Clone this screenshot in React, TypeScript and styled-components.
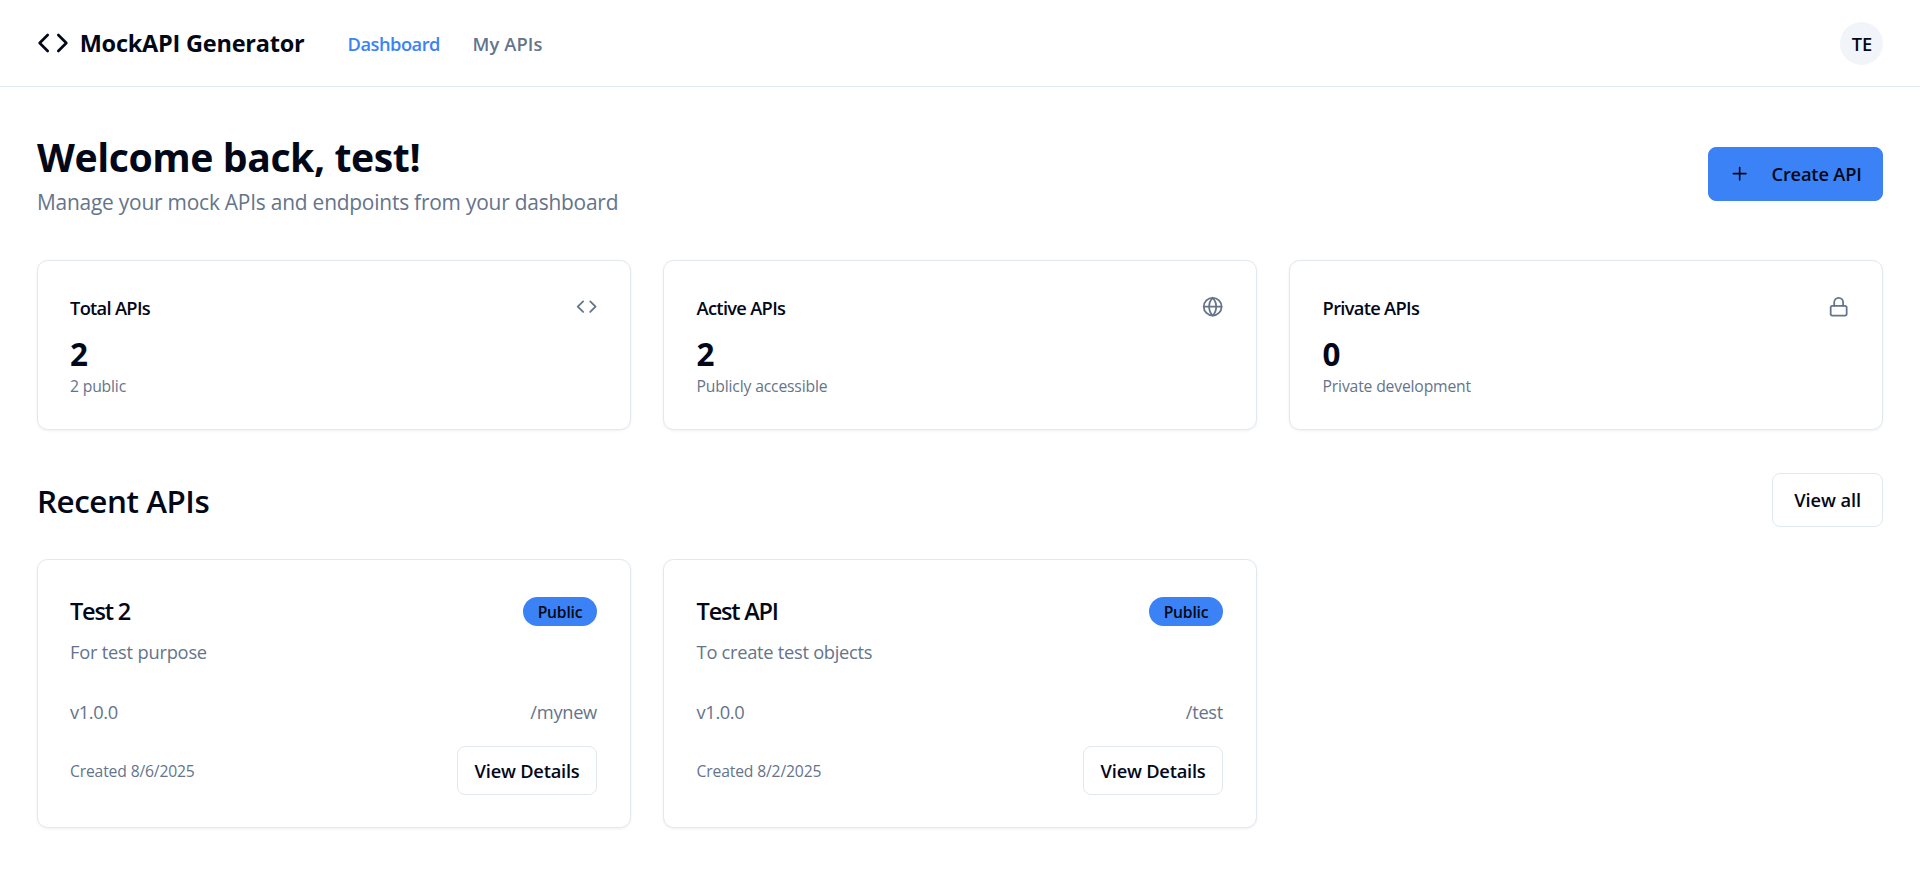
import React from 'react';
import styled, { createGlobalStyle } from 'styled-components';
import { Code, Globe, Lock, Plus } from 'lucide-react';

const color = {
  text: '#020817',
  muted: '#64748b',
  primary: '#3b82f6',
  border: '#e2e8f0',
  subtle: '#f1f5f9',
};

const GlobalStyle = createGlobalStyle`
  *, *::before, *::after { box-sizing: border-box; }
  body {
    margin: 0;
    background: #ffffff;
    color: ${color.text};
    font-family: "Segoe UI", "Open Sans", sans-serif;
  }
  h1, h2, h3, p { margin: 0; }
  button { font-family: inherit; }
`;

const Header = styled.header`
  display: flex;
  align-items: center;
  justify-content: space-between;
  height: 87px;
  padding: 0 37px;
  border-bottom: 1px solid ${color.border};
`;

const HeaderLeft = styled.div`
  display: flex;
  align-items: center;
  gap: 43px;
`;

const Logo = styled.div`
  display: flex;
  align-items: center;
  gap: 10.67px;
  font-size: 23.5px;
  font-weight: 700;
  letter-spacing: -0.23px;
  line-height: 32px;
`;

const Nav = styled.nav`
  display: flex;
  gap: 32.67px;
  padding-top: 2px;
`;

const NavLink = styled.a<{ $active?: boolean; $tracking?: number }>`
  color: ${(p) => (p.$active ? color.primary : color.muted)};
  font-size: 18.3px;
  font-weight: 600;
  letter-spacing: ${(p) => p.$tracking ?? 0}px;
  line-height: 28px;
`;

const Avatar = styled.div`
  display: flex;
  align-items: center;
  justify-content: center;
  width: 43px;
  height: 43px;
  padding: 1px 0 0 1px;
  border-radius: 50%;
  background: ${color.subtle};
  font-size: 18.3px;
  font-weight: 600;
`;

const Main = styled.main`
  padding: 43px 37px;
`;

const Hero = styled.section`
  display: flex;
  align-items: center;
  justify-content: space-between;
  height: 88px;
  margin-bottom: 42px;
`;

const HeroTitle = styled.h1`
  font-size: 39.2px;
  font-weight: 700;
  letter-spacing: -0.43px;
  line-height: 53px;
`;

const HeroText = styled.p`
  margin-top: 3px;
  color: ${color.muted};
  font-size: 20.9px;
  letter-spacing: -0.21px;
  line-height: 32px;
`;

const Button = styled.button<{ $primary?: boolean; $small?: boolean }>`
  display: inline-flex;
  align-items: center;
  justify-content: center;
  gap: 21.33px;
  height: ${(p) => (p.$small ? 49 : 54)}px;
  padding: 0 ${(p) => (p.$primary ? 20.3 : p.$small ? 16.5 : 21)}px;
  border: 1px solid ${(p) => (p.$primary ? color.primary : color.border)};
  border-radius: 8px;
  background: ${(p) => (p.$primary ? color.primary : '#ffffff')};
  color: ${color.text};
  font-size: 18.3px;
  font-weight: 600;
  letter-spacing: ${(p) => (p.$primary ? -0.18 : p.$small ? -0.22 : -0.1)}px;
  line-height: 28px;
  white-space: nowrap;
`;

const CardGrid = styled.div`
  display: grid;
  grid-template-columns: repeat(3, 1fr);
  gap: 32px;
`;

const Card = styled.article<{ $inset?: number }>`
  padding: 32px 33px 32px ${(p) => p.$inset ?? 32}px;
  border: 1px solid ${color.border};
  border-radius: 10.67px;
  background: #ffffff;
  box-shadow: 0 1px 3px rgba(0, 0, 0, 0.06);
`;

const StatHeader = styled.div`
  display: flex;
  align-items: center;
  justify-content: space-between;
  height: 28px;
  margin-bottom: 11px;
  color: ${color.muted};
`;

const StatTitle = styled.h3`
  padding-top: 2px;
  color: ${color.text};
  font-size: 18.3px;
  font-weight: 600;
  letter-spacing: -0.7px;
  line-height: 28px;
`;

const StatValue = styled.div`
  padding-top: 1px;
  font-size: 31.4px;
  font-weight: 700;
  line-height: 41px;
`;

const Small = styled.p`
  padding-top: 1px;
  color: ${color.muted};
  font-size: 15.7px;
  letter-spacing: -0.16px;
  line-height: 22px;
`;

const SectionHeader = styled.div`
  display: flex;
  align-items: center;
  justify-content: space-between;
  height: 54px;
  margin: 43px 0 32px;
`;

const SectionTitle = styled.h2`
  padding-top: 2px;
  font-size: 31.4px;
  font-weight: 600;
  letter-spacing: -0.45px;
  line-height: 42px;
`;

const ApiHeader = styled.div`
  display: flex;
  align-items: center;
  justify-content: space-between;
  height: 39px;
`;

const ApiTitle = styled.h3`
  padding-bottom: 2px;
  font-size: 23.5px;
  font-weight: 600;
  letter-spacing: -1.2px;
  line-height: 32px;
`;

const Badge = styled.span`
  display: inline-flex;
  align-items: center;
  height: 29px;
  padding: 1px 14.67px 0;
  border-radius: 15px;
  background: ${color.primary};
  font-size: 15.7px;
  font-weight: 600;
  letter-spacing: -0.2px;
`;

const ApiText = styled.span<{ $tracking?: number }>`
  color: ${color.muted};
  font-size: 18.3px;
  letter-spacing: ${(p) => p.$tracking ?? -0.17}px;
  line-height: 28px;
`;

const ApiDescription = styled(ApiText).attrs({ as: 'p' })`
  margin-top: 7px;
`;

const ApiMeta = styled.div`
  display: flex;
  justify-content: space-between;
  height: 28px;
  margin-top: 32px;
`;

const ApiFooter = styled.div`
  display: flex;
  align-items: center;
  justify-content: space-between;
  margin-top: 20px;
`;

const stats = [
  { title: 'Total APIs', value: 2, note: '2 public', inset: 32, Icon: Code },
  { title: 'Active APIs', value: 2, note: 'Publicly accessible', inset: 32.6, Icon: Globe },
  { title: 'Private APIs', value: 0, note: 'Private development', inset: 32.6, Icon: Lock },
];

const apis = [
  { name: 'Test 2', description: 'For test purpose', inset: 32, tracking: -0.22, path: '/mynew', created: '8/6/2025' },
  { name: 'Test API', description: 'To create test objects', inset: 32.6, tracking: -0.28, path: '/test', created: '8/2/2025' },
];

export default function App() {
  return (
    <>
      <GlobalStyle />
      <Header>
        <HeaderLeft>
          <Logo>
            <Code size={32} />
            <span>MockAPI Generator</span>
          </Logo>
          <Nav>
            <NavLink $active $tracking={-0.5}>Dashboard</NavLink>
            <NavLink $tracking={0.1}>My APIs</NavLink>
          </Nav>
        </HeaderLeft>
        <Avatar>TE</Avatar>
      </Header>
      <Main>
        <Hero>
          <div>
            <HeroTitle>Welcome back, test!</HeroTitle>
            <HeroText>Manage your mock APIs and endpoints from your dashboard</HeroText>
          </div>
          <Button $primary>
            <Plus size={21.33} strokeWidth={1.8} />
            Create API
          </Button>
        </Hero>
        <CardGrid>
          {stats.map(({ title, value, note, inset, Icon }) => (
            <Card key={title} $inset={inset}>
              <StatHeader>
                <StatTitle>{title}</StatTitle>
                <Icon size={21.33} />
              </StatHeader>
              <StatValue>{value}</StatValue>
              <Small>{note}</Small>
            </Card>
          ))}
        </CardGrid>
        <SectionHeader>
          <SectionTitle>Recent APIs</SectionTitle>
          <Button>View all</Button>
        </SectionHeader>
        <CardGrid>
          {apis.map((api) => (
            <Card key={api.name} $inset={api.inset}>
              <ApiHeader>
                <ApiTitle>{api.name}</ApiTitle>
                <Badge>Public</Badge>
              </ApiHeader>
              <ApiDescription $tracking={api.tracking}>{api.description}</ApiDescription>
              <ApiMeta>
                <ApiText $tracking={-0.4}>v1.0.0</ApiText>
                <ApiText $tracking={-0.3}>{api.path}</ApiText>
              </ApiMeta>
              <ApiFooter>
                <Small>Created {api.created}</Small>
                <Button $small>View Details</Button>
              </ApiFooter>
            </Card>
          ))}
        </CardGrid>
      </Main>
    </>
  );
}
